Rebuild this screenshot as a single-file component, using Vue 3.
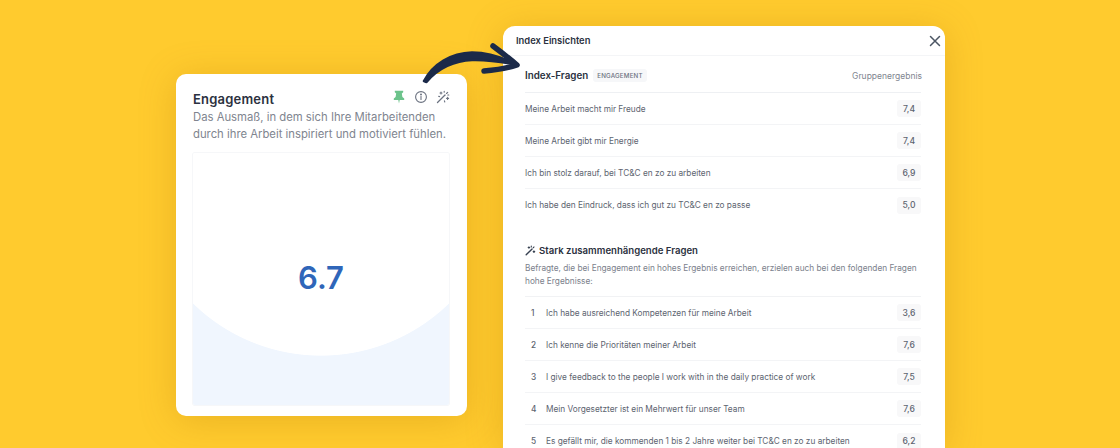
<script setup>
const indexRows = [
  { text: 'Meine Arbeit macht mir Freude', value: '7,4' },
  { text: 'Meine Arbeit gibt mir Energie', value: '7,4' },
  { text: 'Ich bin stolz darauf, bei TC&C en zo zu arbeiten', value: '6,9' },
  { text: 'Ich habe den Eindruck, dass ich gut zu TC&C en zo passe', value: '5,0' }
]
const relatedRows = [
  { n: 1, text: 'Ich habe ausreichend Kompetenzen für meine Arbeit', value: '3,6' },
  { n: 2, text: 'Ich kenne die Prioritäten meiner Arbeit', value: '7,6' },
  { n: 3, text: 'I give feedback to the people I work with in the daily practice of work', value: '7,5' },
  { n: 4, text: 'Mein Vorgesetzter ist ein Mehrwert für unser Team', value: '7,6' },
  { n: 5, text: 'Es gefällt mir, die kommenden 1 bis 2 Jahre weiter bei TC&C en zo zu arbeiten', value: '6,2' }
]
</script>

<template>
  <div class="stage">
    <section class="card">
      <div class="card-head">
        <h2>Engagement</h2>
        <div class="tools">
          <svg width="14" height="14" viewBox="0 0 14 14"><path fill="#6cc38b" d="M2.8.8h8.4v1.5L9.8 3.4l.6 3.7 1.8 1.5v1.3H7.7L7 13.6l-.7-3.7H1.8V8.6l1.8-1.5.6-3.7-1.4-1.1z"/></svg>
          <svg width="14" height="14" viewBox="0 0 14 14" fill="none" stroke="#6b7280" stroke-width="1.1"><circle cx="7" cy="7" r="5.4"/><path d="M7 6.6v2.8" stroke-linecap="round"/><circle cx="7" cy="4.6" r=".45" fill="#6b7280"/></svg>
          <svg width="14" height="14" viewBox="0 0 14 14" fill="none" stroke="#6b7280" stroke-width="1.1" stroke-linecap="round"><path d="M1.5 12.5 9 5" stroke-width="1.3"/><path d="M10.5 3.5l1.2-1.2M5 2v2M4 3h2M11.6 7.4v2M10.6 8.4h2M8.2 1.2v1M12.8 5h-1M3.6 6.6l-1-.3M8.4 10.8l.4 1.2"/></svg>
        </div>
      </div>
      <p class="card-desc">Das Ausmaß, in dem sich Ihre Mitarbeitenden<br>durch ihre Arbeit inspiriert und motiviert fühlen.</p>
      <div class="plot"><span class="score">6.7</span></div>
    </section>

    <section class="modal">
      <header class="modal-head">
        <span>Index Einsichten</span>
        <svg width="12" height="12" viewBox="0 0 12 12" stroke="#4b5563" stroke-width="1.5" stroke-linecap="round"><path d="M1.5 1.5l9 9M10.5 1.5l-9 9"/></svg>
      </header>
      <div class="modal-body">
        <div class="index-title">
          <strong>Index-Fragen</strong>
          <span class="tag">ENGAGEMENT</span>
          <span class="group">Gruppenergebnis</span>
        </div>
        <div class="rows">
          <div v-for="row in indexRows" :key="row.text" class="row">
            <span class="row-text">{{ row.text }}</span>
            <span class="val">{{ row.value }}</span>
          </div>
        </div>

        <h3 class="related">
          <svg width="11" height="11" viewBox="0 0 14 14" fill="none" stroke="#374151" stroke-width="1.4" stroke-linecap="round"><path d="M1.5 12.5 9 5" stroke-width="1.8"/><path d="M10.5 3.5l1-1M5 2.2v2M4 3.2h2M11.4 7.4v2M10.4 8.4h2M8 1.4v1"/></svg>
          Stark zusammenhängende Fragen
        </h3>
        <p class="related-desc">Befragte, die bei Engagement ein hohes Ergebnis erreichen, erzielen auch bei den folgenden Fragen hohe Ergebnisse:</p>
        <div class="rows rows-ruled">
          <div v-for="row in relatedRows" :key="row.n" class="row">
            <span class="num">{{ row.n }}</span>
            <span class="row-text">{{ row.text }}</span>
            <span class="val">{{ row.value }}</span>
          </div>
        </div>
      </div>
    </section>

    <svg class="arrow" width="110" height="60" viewBox="0 0 110 60" fill="#1b2a49" stroke="#1b2a49" stroke-linecap="round" stroke-linejoin="round">
      <path stroke-width="2.5" d="M4 46C13 29 31 18 52 17.5 68 17.5 84 23 97 30 83 27 68 24.5 52 25 35 25.500 18 33 6.500 47Z"/>
      <path stroke-width="5.500" fill="none" d="M73 11C81 17 90 24 97 30 88 33 76 35 64 36"/>
    </svg>
  </div>
</template>

<style scoped>
.stage {
  position: relative;
  width: 1120px;
  height: 448px;
  overflow: hidden;
  box-sizing: border-box;
  background: #ffcb2e;
  display: flex;
  align-items: flex-start;
  gap: 36px;
  padding-left: 176px;
  font-family: "Inter", "Liberation Sans", sans-serif;
}
.card {
  width: 291px;
  height: 342px;
  margin-top: 74px;
  box-sizing: border-box;
  padding: 14px 18px 11px 17px;
  background: #fff;
  border-radius: 10px;
  box-shadow: 0 4px 36px rgba(170, 110, 0, .26);
  display: flex;
  flex-direction: column;
}
.card-head {
  display: flex;
  justify-content: space-between;
  align-items: center;
  height: 21px;
}
.card-head h2 {
  margin: 0;
  font-size: 13px;
  font-weight: 600;
  color: #2b3140;
  letter-spacing: .2px;
}
.tools {
  display: flex;
  gap: 8px;
  align-items: center;
  margin: -4px -1px 0 0;
}
.tools svg { display: block; }
.card-desc {
  margin: 0 0 10px;
  font-size: 11.3px;
  line-height: 17px;
  color: #80858f;
  white-space: nowrap;
}
.plot {
  flex: 1;
  display: flex;
  align-items: center;
  justify-content: center;
  border-radius: 2px;
  box-shadow: 0 0 0 1px #f6f7f9;
  background: radial-gradient(circle 183.5px at 50% 19.5px, #fff 99.6%, #f0f6fe 100%);
}
.score {
  font-size: 31px;
  font-weight: 600;
  color: #2f66b9;
  margin-bottom: 3px;
}
.modal {
  width: 442px;
  height: 422px;
  margin-top: 26px;
  background: #fff;
  border-radius: 12px 12px 0 0;
  box-shadow: 0 4px 36px rgba(170, 110, 0, .26);
  flex-shrink: 0;
}
.modal-head {
  height: 30px;
  box-sizing: border-box;
  padding: 0 4px 0 13px;
  display: flex;
  justify-content: space-between;
  align-items: center;
  border-bottom: 1px solid #f4f5f7;
  font-size: 9.4px;
  font-weight: 600;
  color: #2b3140;
}
.modal-body { padding: 0 24px 0 22px; }
.index-title {
  height: 37px;
  box-sizing: border-box;
  padding-top: 3px;
  display: flex;
  align-items: center;
  gap: 5px;
  border-bottom: 1px solid #eef0f3;
}
.index-title strong {
  font-size: 9.8px;
  font-weight: 600;
  color: #2b3140;
}
.tag {
  background: #f6f7f9;
  border-radius: 3px;
  padding: 3px 4px;
  font-size: 6.2px;
  font-weight: 500;
  color: #6b7280;
  letter-spacing: .2px;
}
.group {
  margin: 0 -1px 0 auto;
  font-size: 8.5px;
  color: #80858f;
}
.row {
  height: 32px;
  box-sizing: border-box;
  display: flex;
  align-items: center;
  border-bottom: 1px solid #f3f4f6;
  font-size: 8.28px;
  color: #5d6470;
}
.row:last-child { border-bottom: none; }
.row-text { flex: 1; white-space: nowrap; }
.num {
  width: 21px;
  padding-left: 6px;
  box-sizing: border-box;
  font-weight: 500;
}
.val {
  width: 24px;
  height: 17px;
  background: #f8f8f9;
  border-radius: 3px;
  display: flex;
  align-items: center;
  justify-content: center;
  font-size: 8.6px;
  font-weight: 500;
  color: #5d6470;
}
.related {
  margin: 22px 0 0;
  display: flex;
  align-items: center;
  gap: 3px;
  height: 14px;
  font-size: 9.6px;
  font-weight: 600;
  color: #2b3140;
}
.related-desc {
  margin: 5px 0 8px;
  font-size: 8.28px;
  line-height: 13px;
  color: #7b818c;
}
.rows-ruled { border-top: 1px solid #f1f2f4; }
.arrow {
  position: absolute;
  left: 420px;
  top: 35px;
}
</style>
